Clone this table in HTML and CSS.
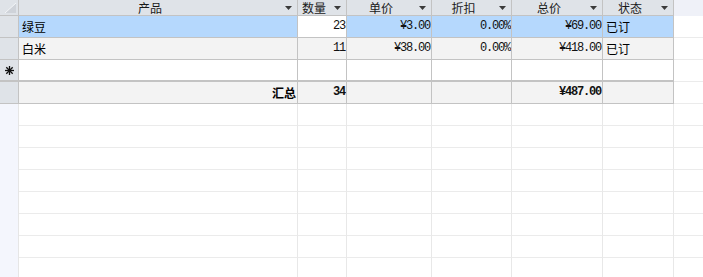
FILE: index.html
```html
<!DOCTYPE html>
<html lang="zh">
<head>
<meta charset="utf-8">
<link rel="stylesheet" href="styles.css">
</head>
<body>
<div class="grid">
  <!-- header -->
  <div class="hc corner"><svg width="14" height="12" viewBox="0 0 14 12"><polygon points="13,1 13,11 2,11" fill="#cfd3d9"/><polyline points="2,11 13,1" stroke="#f4f6f8" stroke-width="1" fill="none"/></svg></div>
  <div class="hc col"><span class="ht">产品</span><svg class="arr" width="7" height="4" viewBox="0 0 7 4"><polygon points="0,0 7,0 3.5,4" fill="#3a3a3a"/></svg></div>
  <div class="hc col"><span class="ht">数量</span><svg class="arr" width="7" height="4" viewBox="0 0 7 4"><polygon points="0,0 7,0 3.5,4" fill="#3a3a3a"/></svg></div>
  <div class="hc col"><span class="ht">单价</span><svg class="arr" width="7" height="4" viewBox="0 0 7 4"><polygon points="0,0 7,0 3.5,4" fill="#3a3a3a"/></svg></div>
  <div class="hc col"><span class="ht">折扣</span><svg class="arr" width="7" height="4" viewBox="0 0 7 4"><polygon points="0,0 7,0 3.5,4" fill="#3a3a3a"/></svg></div>
  <div class="hc col"><span class="ht">总价</span><svg class="arr" width="7" height="4" viewBox="0 0 7 4"><polygon points="0,0 7,0 3.5,4" fill="#3a3a3a"/></svg></div>
  <div class="hc col"><span class="ht">状态</span><svg class="arr" width="7" height="4" viewBox="0 0 7 4"><polygon points="0,0 7,0 3.5,4" fill="#3a3a3a"/></svg></div>
  <div class="hfill"></div>

  <!-- row 1 (selected) -->
  <div class="rh"></div>
  <div class="c sel txt">绿豆</div>
  <div class="c cur num">23</div>
  <div class="c sel num">¥3.00</div>
  <div class="c sel num">0.00%</div>
  <div class="c sel num">¥69.00</div>
  <div class="c sel txt">已订</div>
  <div class="fill"></div>

  <!-- row 2 -->
  <div class="rh"></div>
  <div class="c alt txt">白米</div>
  <div class="c alt num">11</div>
  <div class="c alt num">¥38.00</div>
  <div class="c alt num">0.00%</div>
  <div class="c alt num">¥418.00</div>
  <div class="c alt txt">已订</div>
  <div class="fill"></div>

  <!-- new row -->
  <div class="rh newrow"><svg width="9" height="9" viewBox="0 0 9 9"><g stroke="#111" stroke-width="1.3"><line x1="4.5" y1="0" x2="4.5" y2="9"/><line x1="0" y1="4.5" x2="9" y2="4.5"/><line x1="1.3" y1="1.3" x2="7.7" y2="7.7"/><line x1="7.7" y1="1.3" x2="1.3" y2="7.7"/></g></svg></div>
  <div class="c nw"></div>
  <div class="c nw"></div>
  <div class="c nw"></div>
  <div class="c nw"></div>
  <div class="c nw"></div>
  <div class="c nw"></div>
  <div class="fill"></div>

  <!-- summary -->
  <div class="rh"></div>
  <div class="c alt txt right bold">汇总</div>
  <div class="c alt num bold">34</div>
  <div class="c alt"></div>
  <div class="c alt"></div>
  <div class="c alt num bold">¥487.00</div>
  <div class="c alt"></div>
  <div class="fill"></div>

  <!-- empty rows -->
  <div class="erh"></div><div class="e"></div><div class="e"></div><div class="e"></div><div class="e"></div><div class="e"></div><div class="e"></div><div class="ef"></div>
  <div class="erh"></div><div class="e"></div><div class="e"></div><div class="e"></div><div class="e"></div><div class="e"></div><div class="e"></div><div class="ef"></div>
  <div class="erh"></div><div class="e"></div><div class="e"></div><div class="e"></div><div class="e"></div><div class="e"></div><div class="e"></div><div class="ef"></div>
  <div class="erh"></div><div class="e"></div><div class="e"></div><div class="e"></div><div class="e"></div><div class="e"></div><div class="e"></div><div class="ef"></div>
  <div class="erh"></div><div class="e"></div><div class="e"></div><div class="e"></div><div class="e"></div><div class="e"></div><div class="e"></div><div class="ef"></div>
  <div class="erh"></div><div class="e"></div><div class="e"></div><div class="e"></div><div class="e"></div><div class="e"></div><div class="e"></div><div class="ef"></div>
  <div class="erh"></div><div class="e"></div><div class="e"></div><div class="e"></div><div class="e"></div><div class="e"></div><div class="e"></div><div class="ef"></div>
  <div class="erh"></div><div class="e"></div><div class="e"></div><div class="e"></div><div class="e"></div><div class="e"></div><div class="e"></div><div class="ef"></div>
</div>
</body>
</html>
```

FILE: styles.css
```css
html, body {
  margin: 0;
  padding: 0;
  background: #ffffff;
  width: 703px;
  height: 277px;
  overflow: hidden;
}

.grid {
  display: grid;
  grid-template-columns: 19px 279px 49px 85px 80px 91px 71px 29px;
  grid-template-rows: 16px;
  grid-auto-rows: 22px;
  font-family: "Noto Sans CJK SC", "Noto Sans", sans-serif;
  font-size: 12px;
  color: #000;
}

.grid > div {
  box-sizing: border-box;
  overflow: hidden;
}

/* header */
.hc {
  background: #dfe3e8;
  border-right: 1px solid #c3c3c3;
  border-bottom: 1px solid #c3c3c3;
  display: flex;
  align-items: center;
}

.corner {
  padding: 2px 0 0 3px;
  align-items: flex-start;
}

.corner svg {
  display: block;
}

.col {
  padding: 0 5px 0 4px;
}

.ht {
  flex: 1;
  text-align: center;
  line-height: 15px;
  color: #1a1a1a;
  white-space: nowrap;
}

.arr {
  display: block;
  flex: none;
  margin: 1px 0 0 8px;
}

.hfill {
  background: #eff1f8;
}

/* row headers */
.rh {
  background: #dfe3e8;
  border-right: 1px solid #c3c3c3;
  border-bottom: 1px solid #c3c3c3;
}

.newrow {
  display: flex;
  align-items: center;
  padding-left: 5px;
  border-bottom: 2px solid #c3c3c3;
}

.newrow svg {
  display: block;
}

/* data cells */
.c {
  border-right: 1px solid #c3c3c3;
  border-bottom: 1px solid #c3c3c3;
  line-height: 21px;
  white-space: nowrap;
}

.sel {
  background: #b5d8fd;
}

.cur {
  background: #ffffff;
}

.alt {
  background: #f3f3f3;
}

.nw {
  background: #ffffff;
  border-bottom: 2px solid #c3c3c3;
}

.txt {
  padding-left: 3px;
}

.right {
  text-align: right;
  padding-right: 1px;
}

.num {
  text-align: right;
  font-family: "Liberation Mono", "DejaVu Sans Mono", monospace;
  font-size: 12px;
  letter-spacing: -1.2px;
  padding-right: 1px;
  color: #111;
}

.bold {
  font-weight: bold;
}

.fill {
  border-bottom: 1px solid #ebebeb;
}

/* empty rows */
.erh {
  background: #f4f6fd;
  border-right: 1px solid #e6e6e6;
}

.e {
  border-right: 1px solid #e8e8e8;
  border-bottom: 1px solid #ebebeb;
}

.ef {
  border-bottom: 1px solid #ebebeb;
}
```
